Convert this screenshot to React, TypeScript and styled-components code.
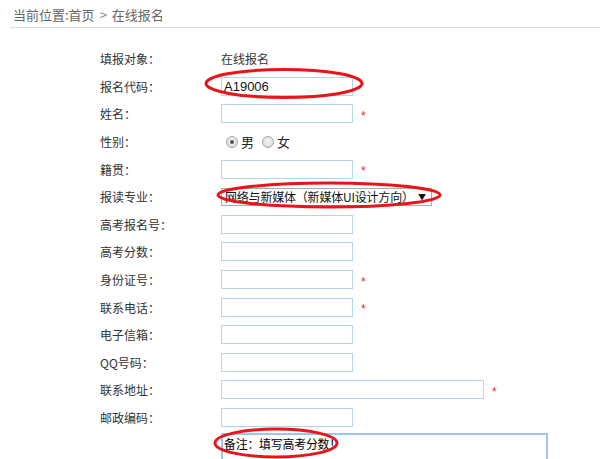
import React from "react";
import styled, { createGlobalStyle } from "styled-components";

const Global = createGlobalStyle`
  html, body { margin: 0; padding: 0; background: #fff; }
  body { font-family: "Liberation Sans", "Noto Sans CJK SC", sans-serif; overflow: hidden; }
`;

const Page = styled.div`
  position: relative;
  width: 600px;
  height: 459px;
  overflow: hidden;
`;

const Breadcrumb = styled.div`
  margin-left: 10px;
  padding-left: 3px;
  height: 27px;
  border-bottom: 1px solid #dcdcdc;
  font-size: 13px;
  color: #666;
  font-family: "Noto Sans CJK SC", sans-serif;
  & > span { line-height: 30px; }
`;

const Sep = styled.span`
  margin: 0 5px;
  color: #888;
`;

const Form = styled.div`
  margin: 17px 0 0 100px;
  display: grid;
  grid-template-columns: 121px 1fr;
  grid-auto-rows: 27.6px;
  align-items: center;
  font-size: 12px;
  color: #333;
  font-family: "Noto Sans CJK SC", sans-serif;
`;

const Label = styled.div`
  white-space: nowrap;
`;

const Value = styled.div`
  display: flex;
  align-items: center;
`;

const Input = styled.input<{ $w?: number }>`
  box-sizing: border-box;
  width: ${(p) => p.$w ?? 132}px;
  height: 19px;
  border: 1px solid #b4d6ea;
  padding: 0 2px;
  margin: 0;
  font-family: "Liberation Sans", Arial, sans-serif;
  font-size: 13px;
  color: #111;
  outline: none;
  background: #fff;
`;

const Star = styled.span`
  color: #ee2222;
  font-size: 12px;
  margin-left: 8px;
  font-family: "Liberation Sans", sans-serif;
  position: relative;
  top: 2px;
`;

const RadioGroup = styled.label<{ $first?: boolean }>`
  display: inline-flex;
  align-items: center;
  margin-left: ${(p) => (p.$first ? 5 : 0)}px;
  margin-right: 8px;
  font-size: 13px;
  color: #222;
`;

const Radio = styled.span<{ $checked?: boolean }>`
  width: 10px;
  height: 10px;
  border-radius: 50%;
  border: 1px solid #a8a8a8;
  background: radial-gradient(circle at 50% 40%, #f4f4f4, #d4d4d4);
  margin-right: 3px;
  display: inline-flex;
  align-items: center;
  justify-content: center;
  &::after {
    content: "";
    width: 4px;
    height: 4px;
    border-radius: 50%;
    background: ${(p) => (p.$checked ? "#555" : "transparent")};
  }
`;

const Select = styled.div`
  box-sizing: border-box;
  width: 211px;
  height: 18px;
  border: 1px solid #aaa;
  background: #fff;
  display: flex;
  align-items: center;
  padding: 0 5px 0 3px;
  font-size: 12px;
  color: #111;
  white-space: nowrap;
`;

const SelectText = styled.span`
  flex: 1;
  overflow: hidden;
  letter-spacing: -0.2px;
`;

const Arrow = styled.span`
  font-size: 8px;
  color: #111;
  margin-left: 4px;
`;

const NoteRow = styled.div`
  margin: 2px 0 0 221px;
`;

const TextArea = styled.div`
  box-sizing: border-box;
  width: 327px;
  height: 60px;
  border: 2px solid #9ec4f2;
  padding: 1px 1px;
  font-size: 12px;
  color: #000;
  font-family: "Noto Sans CJK SC", sans-serif;
  line-height: 15px;
  letter-spacing: -0.3px;
`;

const Marks = styled.svg`
  position: absolute;
  left: 0;
  top: 0;
  pointer-events: none;
`;

const rows: { label: string; kind: "text" | "input" | "radio" | "select"; star?: boolean; w?: number; value?: string }[] = [
  { label: "填报对象：", kind: "text", value: "在线报名" },
  { label: "报名代码：", kind: "input", value: "A19006" },
  { label: "姓名：", kind: "input", star: true },
  { label: "性别：", kind: "radio" },
  { label: "籍贯：", kind: "input", star: true },
  { label: "报读专业：", kind: "select" },
  { label: "高考报名号：", kind: "input" },
  { label: "高考分数：", kind: "input" },
  { label: "身份证号：", kind: "input", star: true },
  { label: "联系电话：", kind: "input", star: true },
  { label: "电子信箱：", kind: "input" },
  { label: "QQ号码：", kind: "input" },
  { label: "联系地址：", kind: "input", star: true, w: 263 },
  { label: "邮政编码：", kind: "input" },
];

export default function App() {
  return (
    <Page>
      <Global />
      <Breadcrumb>
        <span>当前位置:首页</span>
        <Sep>&gt;</Sep>
        <span>在线报名</span>
      </Breadcrumb>
      <Form>
        {rows.map((r) => (
          <React.Fragment key={r.label}>
            <Label>{r.label}</Label>
            <Value>
              {r.kind === "text" && <span>{r.value}</span>}
              {r.kind === "input" && (
                <>
                  <Input $w={r.w} defaultValue={r.value ?? ""} readOnly />
                  {r.star && <Star>*</Star>}
                </>
              )}
              {r.kind === "radio" && (
                <>
                  <RadioGroup $first>
                    <Radio $checked />男
                  </RadioGroup>
                  <RadioGroup>
                    <Radio />女
                  </RadioGroup>
                </>
              )}
              {r.kind === "select" && (
                <Select>
                  <SelectText>网络与新媒体（新媒体UI设计方向）</SelectText>
                  <Arrow>▼</Arrow>
                </Select>
              )}
            </Value>
          </React.Fragment>
        ))}
      </Form>
      <NoteRow>
        <TextArea>备注：填写高考分数！</TextArea>
      </NoteRow>
      <Marks width={600} height={459} viewBox="0 0 600 459">
        <ellipse cx={284} cy={83.5} rx={78} ry={14} fill="none" stroke="#e8141a" strokeWidth={3} />
        <ellipse cx={329} cy={195} rx={111} ry={12} fill="none" stroke="#e8141a" strokeWidth={3} />
        <ellipse cx={276} cy={443} rx={61} ry={14} fill="none" stroke="#e8141a" strokeWidth={3} />
      </Marks>
    </Page>
  );
}
